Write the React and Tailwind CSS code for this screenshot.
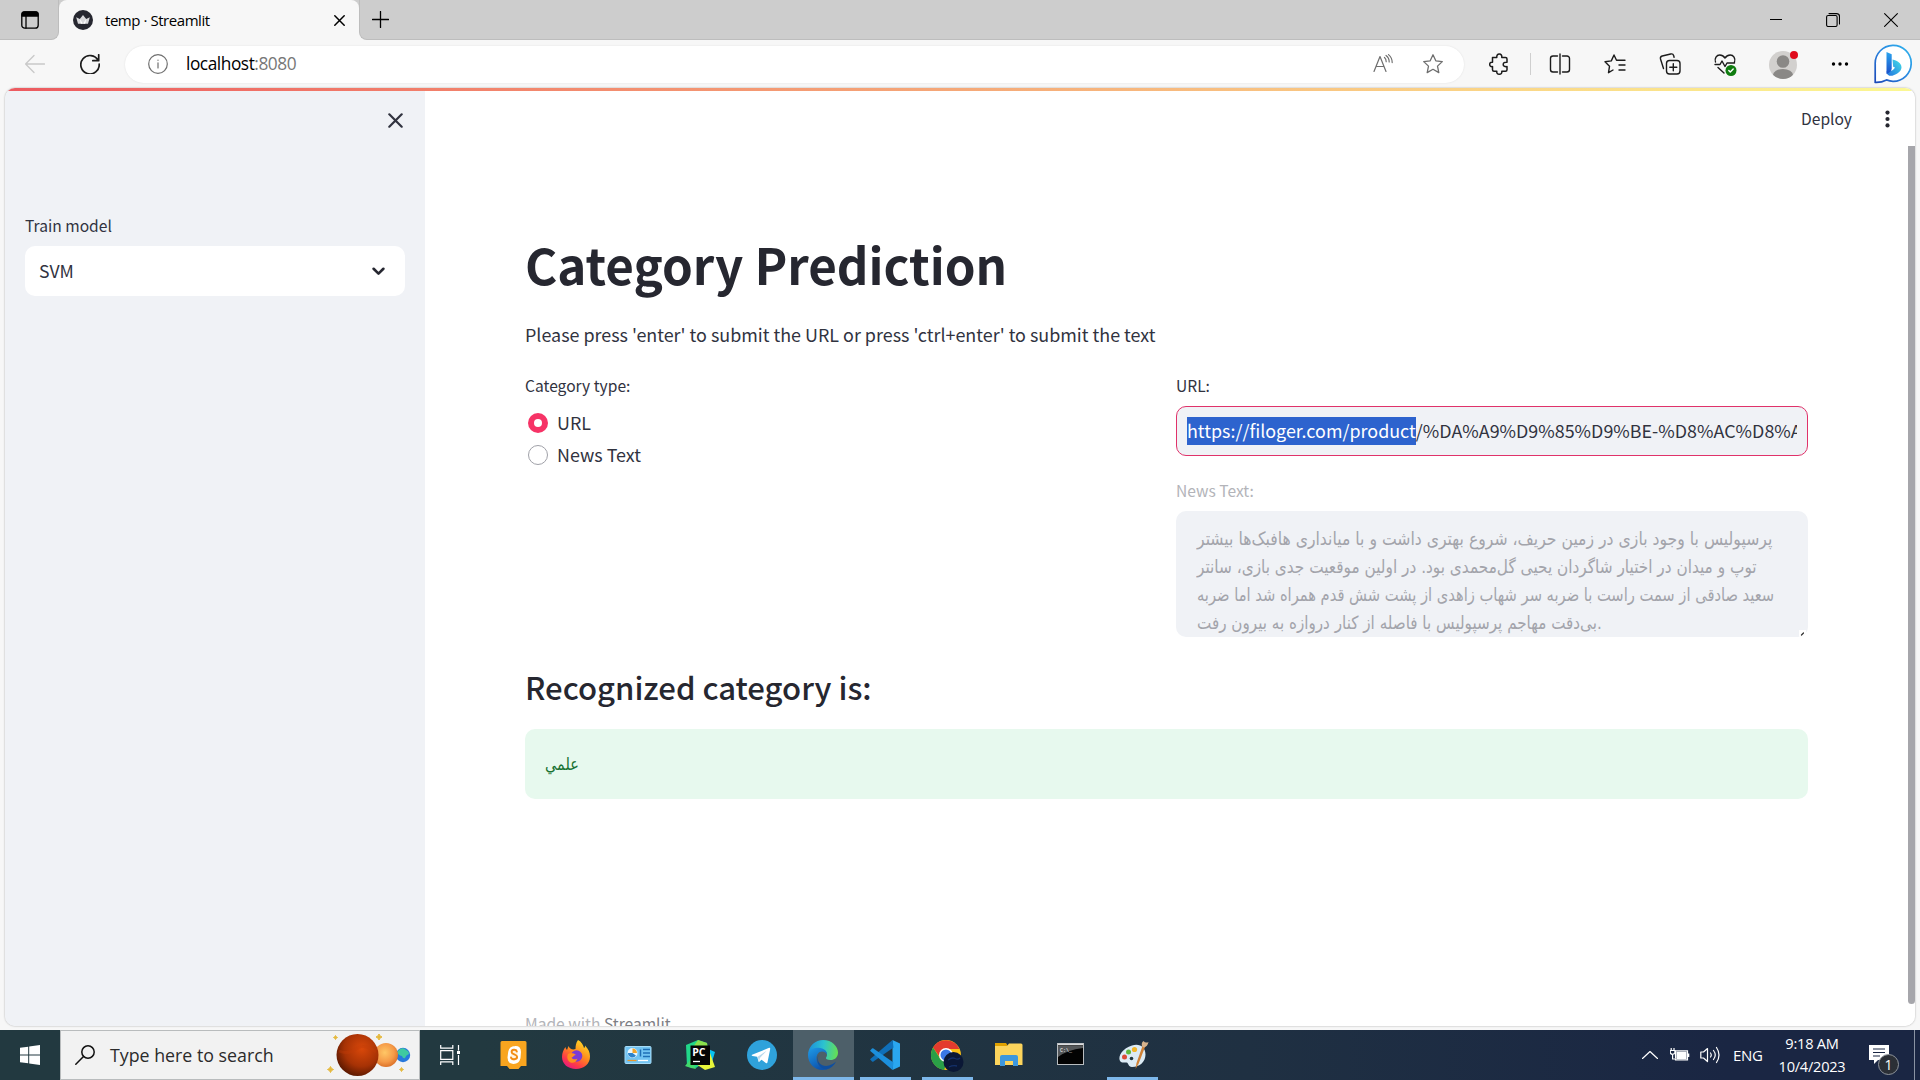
import React from 'react';

const stroke = { fill: 'none', stroke: 'currentColor', strokeLinecap: 'round', strokeLinejoin: 'round' };

function Svg({ className, box = '0 0 24 24', width = 1.4, children }) {
  return (
    <svg className={`shrink-0 ${className}`} viewBox={box} {...stroke} strokeWidth={width}>
      {children}
    </svg>
  );
}

function TabStrip() {
  return (
    <div className="flex h-10 bg-[#cdcdcd] font-['Open_Sans',sans-serif] text-black">
      <div className="w-[59px] bg-[#f7f7f7]">
        <div className="flex h-10 items-center rounded-br-lg border-b border-r border-[#bdbdbd] bg-[#cdcdcd] pl-[21px]">
          <Svg className="h-[18px] w-[18px]" box="0 0 18 18" width={1.3}>
            <rect x="0.8" y="0.8" width="16.4" height="16.4" rx="3" />
            <path d="M1 4V3a2 2 0 0 1 2-2h12a2 2 0 0 1 2 2v2H1Z" fill="currentColor" />
            <path d="M5 5v12" />
          </Svg>
        </div>
      </div>
      <div className="flex w-[300px] items-center rounded-t-lg bg-[#f7f7f7] pl-[14px]">
        <svg className="h-5 w-5 shrink-0" viewBox="0 0 20 20">
          <circle cx="10" cy="10" r="10" fill="#262730" />
          <path d="M3.2 7.2 6.8 9 10 5l3.2 4 3.6-1.8-1.8 6.5H5Z" fill="#d9d9dc" />
          <path d="m6.8 9 3.2 4.7L13.2 9l-1 4.7H7.8Z" fill="#fff" />
        </svg>
        <span className="ml-3 w-[105px] whitespace-nowrap text-[15px] leading-5 tracking-[-0.45px]">temp · Streamlit</span>
        <Svg className="ml-[124px] h-[11px] w-[11px]" box="0 0 11 11" width={1.5}>
          <path d="m.8.8 9.400 9.400M10.200.8.8 10.200" />
        </Svg>
      </div>
      <div className="flex flex-1 bg-[#f7f7f7]">
        <div className="flex flex-1 items-center rounded-bl-lg border-b border-l border-[#bdbdbd] bg-[#cdcdcd] pl-[12px]">
          <Svg className="h-[17px] w-[17px]" box="0 0 17 17" width={1.3}>
            <path d="M8.500.5v16M.5 8.500h16" />
          </Svg>
          <Svg className="ml-auto h-3 w-3" box="0 0 12 12" width={1.1}>
            <path d="M0 5.500h12" />
          </Svg>
          <Svg className="ml-[44px] h-[14px] w-[14px]" box="0 0 14 14" width={1.1}>
            <rect x=".6" y="2.500" width="10.500" height="11" rx="1.500" />
            <path d="M3 .6h7.500a3 3 0 0 1 3 3V11" />
          </Svg>
          <Svg className="ml-[44px] mr-[22px] h-[14px] w-[14px]" box="0 0 14 14" width={1.1}>
            <path d="m.6.6 12.800 12.800M13.400.6.6 13.400" />
          </Svg>
        </div>
      </div>
    </div>
  );
}

const STAR = 'm12 2.800 2.800 6 6.500.8-4.800 4.500 1.300 6.500L12 17.300l-5.800 3.300 1.300-6.500L2.700 9.600l6.500-.8Z';

function BingLogo() {
  return (
    <svg className="ml-6 h-[40px] w-[38px] shrink-0" viewBox="0 0 38 40">
      <defs>
        <linearGradient id="bubble" x1="0" y1="1" x2="1" y2="0">
          <stop offset="0" stopColor="#1b48b8" />
          <stop offset=".5" stopColor="#2a86e0" />
          <stop offset="1" stopColor="#2fb6ee" />
        </linearGradient>
        <linearGradient id="stem" x1="0" y1="0" x2="0" y2="1">
          <stop offset="0" stopColor="#2ba5ef" />
          <stop offset="1" stopColor="#1a4fc9" />
        </linearGradient>
        <linearGradient id="leaf" x1="1" y1="0" x2="0" y2="1">
          <stop offset="0" stopColor="#45e0e8" />
          <stop offset="1" stopColor="#2173df" />
        </linearGradient>
      </defs>
      <path d="M1.200 38.300V20A18 18 0 1 1 19 37.300c-2.500 0-4.500-.6-6.500-1.400-3.500 1.800-7.300 2.600-11.300 2.400Z" fill="#fff" stroke="url(#bubble)" strokeWidth="1.700" />
      <path d="M18.500 15.500c4.500 1.200 9 3.300 9 8 0 4.500-7 8.500-11 8.300-3-.2-4-2.500-3.800-4.800 4 .8 7-1 8.300-3.500l-1.800-.8Z" fill="url(#leaf)" />
      <path d="m12.500 8 5.200 2.300v14c0 2.500-1.500 4.200-5.200 5.700Z" fill="url(#stem)" />
    </svg>
  );
}

function Toolbar() {
  return (
    <div className="flex h-12 items-center bg-[#f7f7f7] pl-[25px] font-['Open_Sans',sans-serif] text-[#1b1b1b]">
      <Svg className="h-5 w-5 text-[#c9c9c9]" box="0 0 20 20" width={1.3}>
        <path d="M19.500 10H.8M9 1.500.6 10 9 18.500" />
      </Svg>
      <Svg className="ml-[35px] h-5 w-5" box="0 0 20 20" width={1.7}>
        <path d="M18.200 6.500A9.200 9.200 0 1 0 19.200 10M18.700.8v5.900h-5.900" />
      </Svg>
      <div className="ml-[25px] flex h-[37px] w-[1339px] items-center rounded-full bg-white pl-[23px] shadow-[0_0_2px_rgba(0,0,0,0.1)]">
        <Svg className="h-5 w-5 text-[#6f6f6f]" box="0 0 20 20" width={1.2}>
          <circle cx="10" cy="10" r="9.300" />
          <path d="M10 8.800v5.200M10 6v.3" />
        </Svg>
        <span className="ml-[18px] whitespace-nowrap text-[17.3px] leading-6 tracking-[-0.45px] text-black">
          localhost<span className="text-[#777]">:8080</span>
        </span>
        <svg className="ml-auto h-5 w-5" viewBox="0 0 20 20" {...stroke} stroke="#6e6e6e" strokeWidth="1.200">
          <path d="m1 17.500 6-15 6 15M3.200 12.500h7.600M11.500 3.500c1.200 1 1.700 2.500 1.700 4.200M13 1.500c2.200 1.500 3.200 3.700 3.200 6.500M15.500.6c2.400 2 3.700 4.800 3.700 8" />
        </svg>
        <svg className="ml-[28px] mr-[19px] h-6 w-6" viewBox="0 0 24 24" {...stroke} stroke="#6e6e6e" strokeWidth="1.300">
          <path d={STAR} />
        </svg>
      </div>
      <Svg className="ml-6 h-6 w-6" width={1.500}>
        <path d="M4.500 5.500h4.300c-.3-2 .7-3.500 2.500-3.500s2.800 1.500 2.500 3.500h3.700q1.500 0 1.500 1.500v3.200c-2.500-.2-3.800.6-3.800 2.200s1.300 2.500 3.800 2.200v3.200q0 1.500-1.500 1.500h-3.700c.3 1.900-.7 3-2.500 3s-2.800-1.100-2.500-3H6q-1.500 0-1.500-1.500v-3.200c-1.800.2-2.800-.6-2.800-2.200s1-2.400 2.800-2.200Z" />
      </Svg>
      <div className="ml-[18px] h-[22px] w-px bg-[#cfcfcf]" />
      <Svg className="ml-[17px] h-6 w-6" width={1.400}>
        <path d="M9.500 4H5a2.500 2.500 0 0 0-2.500 2.500v11A2.500 2.500 0 0 0 5 20h4.500M14.500 4H19a2.500 2.500 0 0 1 2.500 2.500v11A2.500 2.500 0 0 1 19 20h-4.500M12 2v20" />
      </Svg>
      <Svg className="ml-[31px] h-6 w-6" width={1.400}>
        <path d="m10 18-4.500 2.700 1-6.400L2 9.800l6.300-.9L11 3l2.500 5.200H22M16 13h6M16 18h6" />
      </Svg>
      <Svg className="ml-[31px] h-6 w-6" width={1.400}>
        <rect x="8.500" y="8.500" width="13.500" height="13.500" rx="3" />
        <path d="M15.300 11.800v7M11.800 15.300h7M5.500 16.500 2.500 7A2.500 2.500 0 0 1 4.200 4l8.500-2a2.500 2.500 0 0 1 3 1.700l.4 1.500" />
      </Svg>
      <Svg className="ml-[31px] h-6 w-6" width={1.400}>
        <path d="M2.500 10C1.200 6.200 3.600 3 6.800 3c2.200 0 3.900 1.200 5.200 3 1.300-1.800 3-3 5.200-3 3.200 0 5.600 3.200 4.300 7M2 12.500h5l2-3.500 3 5.500 2-3.500h7.500M5 15.500l6 5.500" />
        <circle cx="18" cy="18.500" r="5.500" fill="#107c10" stroke="none" />
        <path d="m15.800 18.500 1.500 1.600 2.900-3" stroke="#fff" />
      </Svg>
      <svg className="ml-8 h-8 w-8 shrink-0" viewBox="0 0 32 32">
        <clipPath id="face"><circle cx="14" cy="17" r="14" /></clipPath>
        <g clipPath="url(#face)">
          <rect y="3" width="28" height="28" fill="#d2d0ce" />
          <circle cx="14" cy="13.500" r="6.300" fill="#8a8886" />
          <ellipse cx="14" cy="27" rx="10" ry="6" fill="#8a8886" />
        </g>
        <circle cx="25" cy="7" r="4" fill="#e00b1c" />
      </svg>
      <svg className="ml-[29px] h-5 w-5 shrink-0" viewBox="0 0 20 20">
        <circle cx="3.500" cy="10" r="1.700" /><circle cx="10" cy="10" r="1.700" /><circle cx="16.500" cy="10" r="1.700" />
      </svg>
      <BingLogo />
    </div>
  );
}

function Sidebar() {
  return (
    <aside className="flex w-[420px] shrink-0 flex-col bg-[#f0f2f6] px-5 pt-[25px]">
      <Svg className="mr-[2px] h-[15px] w-[15px] self-end" box="0 0 15 15" width={2.200}>
        <path d="m1.300 1.300 12.400 12.400M13.700 1.300 1.300 13.700" />
      </Svg>
      <label className="mt-[85px] text-[15.6px] leading-6">Train model</label>
      <div className="mt-[9px] flex h-[50px] items-center justify-between rounded-[10px] bg-white pl-[14px] pr-5">
        <span className="text-[17.6px] leading-6">SVM</span>
        <Svg className="h-[13px] w-[13px] text-[#262730]" box="0 0 12 12" width={2.400}>
          <path d="m1.500 3.500 4.500 4.500 4.500-4.500" />
        </Svg>
      </div>
    </aside>
  );
}

const NEWS = [
  { text: 'پرسپولیس با وجود بازی در زمین حریف، شروع بهتری داشت و با میانداری هافبک‌ها بیشتر', fit: 'scale-x-[0.87]' },
  { text: 'توپ و میدان در اختیار شاگردان یحیی گل‌محمدی بود. در اولین موقعیت جدی بازی، سانتر', fit: 'scale-x-[0.851]' },
  { text: 'سعید صادقی از سمت راست با ضربه سر شهاب زاهدی از پشت شش قدم همراه شد اما ضربه', fit: 'scale-x-[0.815]' },
  { text: 'بی‌دقت مهاجم پرسپولیس با فاصله از کنار دروازه به بیرون رفت.', fit: 'scale-x-[0.843]' },
];

function Main() {
  return (
    <main className="flex min-w-0 flex-1 overflow-hidden bg-white">
      <div className="ml-[100px] w-[1283px] shrink-0 pt-[146px]">
        <h1 className="whitespace-nowrap text-[49.3px] font-bold leading-[60px] text-[#262730]">Category Prediction</h1>
        <p className="mt-[25px] whitespace-nowrap text-[17.92px] leading-[30px]">
          Please press 'enter' to submit the URL or press 'ctrl+enter' to submit the text
        </p>
        <div className="mt-6 flex justify-between">
          <div className="flex flex-col">
            <span className="text-[15.6px] leading-6">Category type:</span>
            <div className="mt-[10px] flex h-8 items-center pl-[3px]">
              <span className="flex h-5 w-5 items-center justify-center rounded-full bg-[#f63366]">
                <span className="h-2 w-2 rounded-full bg-white" />
              </span>
              <span className="ml-[9px] pb-[2px] text-[17.9px] leading-[30px]">URL</span>
            </div>
            <div className="flex h-8 items-center pl-[3px]">
              <span className="h-5 w-5 rounded-full border border-[#a0a1a8] bg-white" />
              <span className="ml-[9px] pb-[2px] text-[17.9px] leading-[30px]">News Text</span>
            </div>
          </div>
          <div className="flex w-[632px] flex-col">
            <span className="text-[15.6px] leading-6">URL:</span>
            <div className="mt-[9px] flex h-[50px] items-center rounded-[10px] border border-[#e0326a] bg-[#f0f2f6] px-[10px]">
              <div className="flex h-7 flex-1 overflow-hidden whitespace-nowrap text-[17.9px] leading-[26px]">
                <span className="bg-[#2d63ce] text-white">https://filoger.com/product</span>
                <span>/%DA%A9%D9%85%D9%BE-%D8%AC%D8%A7</span>
              </div>
            </div>
            <span className="mt-[22px] text-[15.6px] leading-6 text-[#b3b4b9]">News Text:</span>
            <div className="mt-[9px] flex h-[126px] overflow-hidden rounded-[10px] bg-[#f0f2f6] pl-[21px] pt-[14px]">
              <div className="flex w-0 flex-1 flex-col items-start font-['DejaVu_Sans',sans-serif] text-[18px] leading-7 text-[#a3a4ab]">
                {NEWS.map((line) => (
                  <span key={line.text} className={`origin-left whitespace-nowrap ${line.fit}`}>{line.text}</span>
                ))}
              </div>
              <Svg className="mr-[2px] h-[7px] w-[7px] self-end bg-white text-[#333]" box="0 0 7 7" width={1.300}>
                <path d="m2.500 5 2-2" />
              </Svg>
            </div>
          </div>
        </div>
        <h3 className="mt-[28px] whitespace-nowrap text-[31.1px] font-medium leading-[44px] text-[#262730]">Recognized category is:</h3>
        <div className="mt-[20px] flex h-[70px] items-center rounded-[10px] bg-[#e7f9ee] pl-5">
          <span className="origin-left scale-x-[0.85] font-['DejaVu_Sans',sans-serif] text-[17px] leading-8 text-[#177233]">علمي</span>
        </div>
        <footer className="mt-[212px] whitespace-nowrap text-[15.6px] leading-6 text-[#b3b4b9]">
          Made with <span className="text-[#7d7e85]">Streamlit</span>
        </footer>
      </div>
      <div className="ml-auto flex w-[107px] shrink-0">
        <div className="flex-1" />
        <div className="mt-[58px] h-[858px] w-[7px] rounded-b-full bg-[#a6a6ab]" />
      </div>
    </main>
  );
}

function DeployBar() {
  return (
    <div className="absolute right-[23px] top-[16px] flex items-center">
      <span className="pb-px text-[15.6px] leading-7">Deploy</span>
      <svg className="ml-[31px] h-5 w-[9px]" viewBox="0 0 9 20" fill="#262730">
        <circle cx="4.500" cy="3.600" r="2.100" /><circle cx="4.500" cy="10" r="2.100" /><circle cx="4.500" cy="16.400" r="2.100" />
      </svg>
    </div>
  );
}

function Sparkle({ x, y, r }) {
  return <path d={`M${x} ${y - r}q${r * 0.2} ${r * 0.8} ${r} ${r}q${-r * 0.8} ${r * 0.2} ${-r} ${r}q${-r * 0.2} ${-r * 0.8} ${-r} ${-r}q${r * 0.8} ${-r * 0.2} ${r} ${-r}Z`} fill="#e6b93c" stroke="#e6b93c" />;
}

function Planets() {
  return (
    <svg className="ml-auto mr-[4px] h-[48px] w-[90px]" viewBox="0 0 90 48">
      <defs>
        <radialGradient id="mars" cx=".6" cy=".35" r=".7">
          <stop offset="0" stopColor="#d9480a" /><stop offset=".6" stopColor="#a63205" /><stop offset="1" stopColor="#541600" />
        </radialGradient>
        <radialGradient id="venus" cx=".45" cy=".4" r=".65">
          <stop offset="0" stopColor="#ffc766" /><stop offset=".6" stopColor="#f59a48" /><stop offset="1" stopColor="#d76a22" />
        </radialGradient>
      </defs>
      <circle cx="78" cy="24" r="7.200" fill="#2879dc" />
      <path d="M75 18q4-2 6 1 3 1 3 4-3 1-4 4-2 1-3-2-4-1-5-4Z" fill="#3fc9a0" />
      <circle cx="61" cy="24" r="12" fill="url(#venus)" />
      <circle cx="32.500" cy="24" r="21" fill="url(#mars)" />
      <path d="M14 20q9 4 17-2t20 3" fill="none" stroke="#c33d08" strokeWidth="3" opacity=".35" />
      <Sparkle x={10.500} y={6.500} r={2} /><Sparkle x={54} y={6} r={3} />
      <Sparkle x={5.500} y={38.500} r={3} /><Sparkle x={76.500} y={38.500} r={2} />
    </svg>
  );
}

const APPS = [
  {
    name: 'scratch',
    icon: (
      <svg className="h-8 w-8" viewBox="0 0 32 32">
        <path d="M4 2h23q1.500 0 1.500 1.500V27H23l-2.500 3h-9L9 27H2.500V3.500Q2.500 2 4 2Z" fill="#f9a51f" />
        <path d="M17 8.500q4.500-.5 4.500 4.500l-.5 6q-1 4.500-5.500 4.500-4.500-.3-4.500-5l.7-5.500q.8-4.300 5.300-4.500Z" fill="#fff3e0" stroke="#fff" strokeWidth="3" />
        <path d="M18.800 12.500c-.8-2.700-5.400-2.200-5.200.6.2 2.500 5.400 2 5.500 4.700.2 3-5.600 3.300-6.100.6" fill="none" stroke="#f28c14" strokeWidth="1.900" strokeLinecap="round" />
      </svg>
    ),
  },
  {
    name: 'firefox',
    icon: (
      <svg className="h-8 w-8" viewBox="0 0 32 32">
        <defs>
          <linearGradient id="fox" x1=".8" y1="0" x2=".2" y2="1">
            <stop offset="0" stopColor="#ffe226" /><stop offset=".45" stopColor="#ff8a1e" /><stop offset=".75" stopColor="#ff3b47" /><stop offset="1" stopColor="#e31587" />
          </linearGradient>
        </defs>
        <path d="M18 1c3.500 1.500 5.500 5.500 6 8 1-.5 1-1.500 1-2.500 3.500 3.500 5 7 5 11 0 7.500-6 12.500-14 12.500S2 25 2 18c0-4 1.500-7.500 3.500-10 0 1 .5 2 1.500 3l1.500-4c1 2 2.500 3.500 5 3.500l2-.5C15.500 6.500 16 3.500 18 1Z" fill="url(#fox)" />
        <circle cx="16.500" cy="17" r="5.800" fill="#7a3ad4" />
        <path d="M8 15c2.500-2 6-1 8 1-2 0-2.500 2-4.500 2.500 1 2 4 2.500 6 1-1 3.500-4 5-7 4-3-1.500-4-5-2.500-8.500Z" fill="#ff8f1f" />
      </svg>
    ),
  },
  {
    name: 'card',
    icon: (
      <svg className="h-8 w-8" viewBox="0 0 32 32">
        <rect x="3" y="7.500" width="26" height="17" rx="1" fill="#72c4f2" stroke="#a6dcf8" />
        <circle cx="10.500" cy="14" r="5" fill="#e9f6fd" />
        <path d="M10.500 14V9.500A4.500 4.500 0 0 1 15 14Z" fill="#f0a52c" />
        <path d="M10.500 14H6a4.500 4.500 0 0 0 8 2.800Z" fill="#2c83cc" />
        <path d="M18.500 10.500v7M21 10.500h7M21 14h7M21 17.500h7" stroke="#1f6fb6" strokeWidth="1.500" />
        <path d="M5.500 21.500h9" stroke="#e9982b" strokeWidth="1.300" /><path d="M16 21.500h10" stroke="#fff" strokeWidth="1.300" />
      </svg>
    ),
  },
  {
    name: 'pycharm',
    icon: (
      <svg className="h-8 w-8" viewBox="0 0 32 32">
        <path d="m2 6 12-5 9 3 2 16-13 9-9-2Z" fill="#21d789" />
        <path d="m14 1 9 3 1 7H7Z" fill="#8be04c" />
        <path d="m22 9 9 4-3 10-6-2Z" fill="#07c3f2" />
        <path d="m26 14 5 14-10 3-9-6Z" fill="#e8f53a" />
        <path d="m1 27 6-7 5 10-5-1Z" fill="#42d96b" />
        <rect x="6.500" y="6.500" width="19.500" height="19.500" fill="#050505" />
        <text x="8.200" y="16.500" fill="#fff" fontSize="10.500" fontWeight="700" fontFamily="Open Sans, sans-serif">PC</text>
        <path d="M9 22.500h7" stroke="#fff" strokeWidth="1.300" />
      </svg>
    ),
  },
  {
    name: 'telegram',
    icon: (
      <svg className="h-8 w-8" viewBox="0 0 32 32">
        <circle cx="16" cy="16" r="15" fill="#2fa2db" />
        <path d="m6 15.800 17.200-7q1.200-.2 1 1.300l-2.700 13.200q-.4 1.300-1.700.6l-4.300-3.200-2.200 2.100q-.6.400-.8-.4l-1.300-4.700L6.500 17q-1.500-.6-.5-1.200Z" fill="#fff" />
        <path d="m11.700 17.700 9-6-6.800 7.200-.8 3.600Z" fill="#b9d9ec" />
      </svg>
    ),
  },
  {
    name: 'edge',
    active: true,
    bar: 'w-full',
    icon: (
      <svg className="h-8 w-8" viewBox="0 0 32 32">
        <defs>
          <linearGradient id="wave" x1="0" y1=".4" x2="1" y2=".5">
            <stop offset="0" stopColor="#1c8fdc" /><stop offset=".5" stopColor="#2cc3cf" /><stop offset="1" stopColor="#66e052" />
          </linearGradient>
          <linearGradient id="deep" x1="0" y1="0" x2=".5" y2="1">
            <stop offset="0" stopColor="#1f9be8" /><stop offset="1" stopColor="#0d54ad" />
          </linearGradient>
        </defs>
        <path d="M1.200 14.500C2 6.500 8.500 1 16 1c9 0 15 6.500 15 12.500 0 5-3.500 7.500-7.500 7.500-3.500 0-5-1.300-4.500-2.200 2.500-3.300.5-7.800-5.500-8C8 10.500 3 12 1.200 14.500Z" fill="url(#wave)" />
        <path d="M1 16c0-5.500 5.500-7.500 10.500-7.300 5.500.2 9 3.500 8.500 7-1-2.200-3-3.200-5-3.200-3.500 0-5.500 3.500-5.500 7 0 6 5 10 10.500 10.500-1.500.6-2.800 1-4.500 1C7 31 1 24 1 16Z" fill="url(#deep)" />
        <path d="M11.500 16c-3 8 4.500 12.500 10.500 10.500 2.500-.7 5-2.200 7-3.700-2 4-5.500 6.700-9.500 7.700C12 30 8 22 11.500 16Z" fill="#0f4fa0" />
      </svg>
    ),
  },
  {
    name: 'vscode',
    bar: 'w-[51px]',
    icon: (
      <svg className="h-8 w-8" viewBox="0 0 32 32">
        <path d="M23.500 1 31 4.500v23L23.500 31Z" fill="#2aa7f0" />
        <path d="M23.500 1 1 20.200l2 2.300q.7.500 1.500 0L24.500 8.500Z" fill="#0f6fb8" />
        <path d="M23.500 31 1 11.800l2-2.300q.7-.5 1.500 0L24.500 23.500Z" fill="#1c8fdc" />
      </svg>
    ),
  },
  {
    name: 'chrome',
    bar: 'w-[51px]',
    icon: (
      <svg className="h-9 w-9" viewBox="0 0 36 36">
        <circle cx="17" cy="18" r="15" fill="#fbc116" />
        <path d="M4 10.500A15 15 0 0 1 30.500 12H17l-5.500 9Z" fill="#e33b2e" />
        <path d="M4 10.500 11.500 22l7 2-3.500 9A15 15 0 0 1 4 10.500Z" fill="#2a9f47" />
        <circle cx="17" cy="18" r="7" fill="#fff" /><circle cx="17" cy="18" r="5.500" fill="#3b78e7" />
        <circle cx="24.500" cy="25" r="10" fill="#0b1836" />
        <path d="M19 23q4-3 7-1.500t5-.5M20 30q4-2 8-1" stroke="#14306a" strokeWidth="1.300" fill="none" />
      </svg>
    ),
  },
  {
    name: 'explorer',
    icon: (
      <svg className="h-8 w-8" viewBox="0 0 32 32">
        <path d="M2 4h11l2 3H2Z" fill="#e0a100" />
        <path d="M2 7h12l2-2.500h12q1.500 0 1.500 1.500v20H2Z" fill="#fcd45c" />
        <path d="M7 27V18q0-2 2-2h14q2 0 2 2v9h-5v-5h-8v5Z" fill="#3d97dd" />
      </svg>
    ),
  },
  {
    name: 'terminal',
    icon: (
      <svg className="h-8 w-8" viewBox="0 0 32 32">
        <rect x="2.500" y="4.500" width="26" height="21" fill="#030303" stroke="#b9bdc0" />
        <path d="M3 7h25v2q-16 2-25 9Z" fill="#55585a" />
        <path d="M3 5.500h25" stroke="#d9dcde" strokeWidth="1.600" />
        <text x="5" y="12.500" fill="#fff" fontSize="5" fontFamily="Liberation Mono, monospace">C:\_</text>
      </svg>
    ),
  },
  {
    name: 'paint',
    bar: 'w-[51px]',
    icon: (
      <svg className="h-8 w-8" viewBox="0 0 32 32">
        <path d="M15 6.500c8-2.500 13.500 2 13.500 9S23 28 15 28c-4 0-3-4-5.500-4.500C7 23 5 24.500 3 22 .5 17 6 9 15 6.500Z" fill="#dcebf5" />
        <circle cx="7.500" cy="18" r="2.500" fill="#dc4a38" /><circle cx="11.500" cy="13" r="2.500" fill="#5fb83c" />
        <circle cx="17.500" cy="10.500" r="2.600" fill="#f3b62b" /><circle cx="14.500" cy="19.500" r="1.800" fill="#223840" />
        <path d="m18.500 30 1-6 6-17 2.500 1-6.500 17Z" fill="#cf8136" />
        <path d="M25 7.500q-1-4 1.500-5.500 2 2.500 5 1-1 4.500-4.500 5.500Z" fill="#d6b28c" />
      </svg>
    ),
  },
];

function Taskbar() {
  return (
    <div className="flex h-[50px] bg-linear-to-r from-[#223940] from-25% via-[#1f3042] via-65% to-[#1a2643] to-90% font-['Open_Sans',sans-serif] text-white">
      <div className="flex w-[60px] items-center justify-center">
        <svg className="h-5 w-5" viewBox="0 0 20 20" fill="#fff">
          <path d="M0 2.800 8.200 1.700v7.800H0ZM9.200 1.500 20 0v9.500H9.200ZM0 10.500h8.200v7.800L0 17.200ZM9.200 10.500H20V20L9.200 18.500Z" />
        </svg>
      </div>
      <div className="flex w-[360px] items-center border border-[#b9bcbd] bg-[#f2f2f2] pl-[14px]">
        <Svg className="h-5 w-5 text-[#111]" box="0 0 20 20" width={1.500}>
          <circle cx="13" cy="7" r="6.200" /><path d="M8.500 11.500.8 19.200" />
        </Svg>
        <span className="ml-[15px] whitespace-nowrap text-[17.8px] leading-6 text-[#2b2b2b]">Type here to search</span>
        <Planets />
      </div>
      <div className="flex w-[63.5px] items-center pl-5">
        <svg className="h-5 w-5" viewBox="0 0 20 20" fill="none" stroke="#fff" strokeWidth="1.200">
          <path d="M.7 0v3.200h12.100V0M.7 20v-3.200h12.100V20M.7 5.700h12.100v8.600H.7ZM18.500 0v5.500M18.500 10v10" /><path d="M17 6h3v3h-3Z" fill="#fff" stroke="none" />
        </svg>
      </div>
      {APPS.map((app) => (
        <div key={app.name} className={`flex w-[61.9px] shrink-0 flex-col items-center border-r border-transparent bg-clip-padding ${app.active ? 'bg-[#4d5f69]' : ''}`}>
          <div className="flex h-[47px] items-center justify-center pt-[3px]">{app.icon}</div>
          {app.bar && <div className={`h-[3px] bg-[#7db7ea] ${app.bar}`} />}
        </div>
      ))}
      <div className="ml-auto flex items-center">
        <Svg className="h-2 w-4" box="0 0 16 8" width={1.200}><path d="m.5 7.500 7.500-7 7.500 7" /></Svg>
        <svg className="ml-3 h-[14px] w-5" viewBox="0 0 20 14" fill="none" stroke="#fff" strokeWidth="1.200">
          <path d="M5.500 2.800h12v9h-12ZM18.700 5.500v3.500" /><path d="M7 4.300h9v6H7Z" fill="#fff" />
          <path d="M1.200 0v2.500M4 0v2.500M.3 2.500h4.600v2.200q-.3 1.600-2.300 1.600T.3 4.700ZM2.600 6.300V11h3" fill="#1a2643" />
        </svg>
        <Svg className="ml-[10px] h-[18px] w-5" box="0 0 20 18" width={1.200}>
          <path d="M.8 6v6h2.700l4 3.500v-13l-4 3.500ZM10.500 7q1.500 2 0 4M13.500 4.500q3.500 4.500 0 9M16.500 1.500q5 7.500 0 15" />
        </Svg>
        <span className="ml-[13px] w-[29px] whitespace-nowrap text-[15px] leading-5 tracking-[-0.3px]">ENG</span>
        <div className="ml-4 flex w-[68px] flex-col items-center whitespace-nowrap text-[14.6px] leading-[23px] tracking-[-0.25px]">
          <span>9:18 AM</span>
          <span>10/4/2023</span>
        </div>
        <div className="relative ml-[23px] mr-[25px] h-5 w-5">
          <svg className="h-5 w-5" viewBox="0 0 20 20">
            <path d="M0 0h20v15H9l-4 4v-4H0Z" fill="#fff" /><path d="M4 4h12M4 7.500h12M4 11h7" stroke="#1a2643" strokeWidth="1.200" />
          </svg>
          <span className="absolute left-[9px] top-[9px] flex h-[21px] w-[21px] items-center justify-center rounded-full border border-[#8e949b] bg-[#2b2f36] text-[14px] leading-none">1</span>
        </div>
        <div className="mr-[5px] h-[50px] w-px bg-[#8a93a3]" />
      </div>
    </div>
  );
}

export default function App() {
  return (
    <div className="flex h-[1080px] w-[1920px] flex-col overflow-hidden bg-[#f7f7f7]">
      <TabStrip />
      <Toolbar />
      <div className="relative mx-[5px] mb-[4px] flex h-[938px] overflow-hidden rounded-[10px] font-['Noto_Sans_CJK_SC',sans-serif] text-[#31333f] shadow-[0_0_2px_rgba(0,0,0,0.35)]">
        <Sidebar />
        <Main />
        <DeployBar />
        <div className="absolute inset-x-0 top-0 h-[3px] bg-linear-to-r from-[#ec5a60] via-[#f5a878] to-[#fbf893]" />
      </div>
      <Taskbar />
    </div>
  );
}
